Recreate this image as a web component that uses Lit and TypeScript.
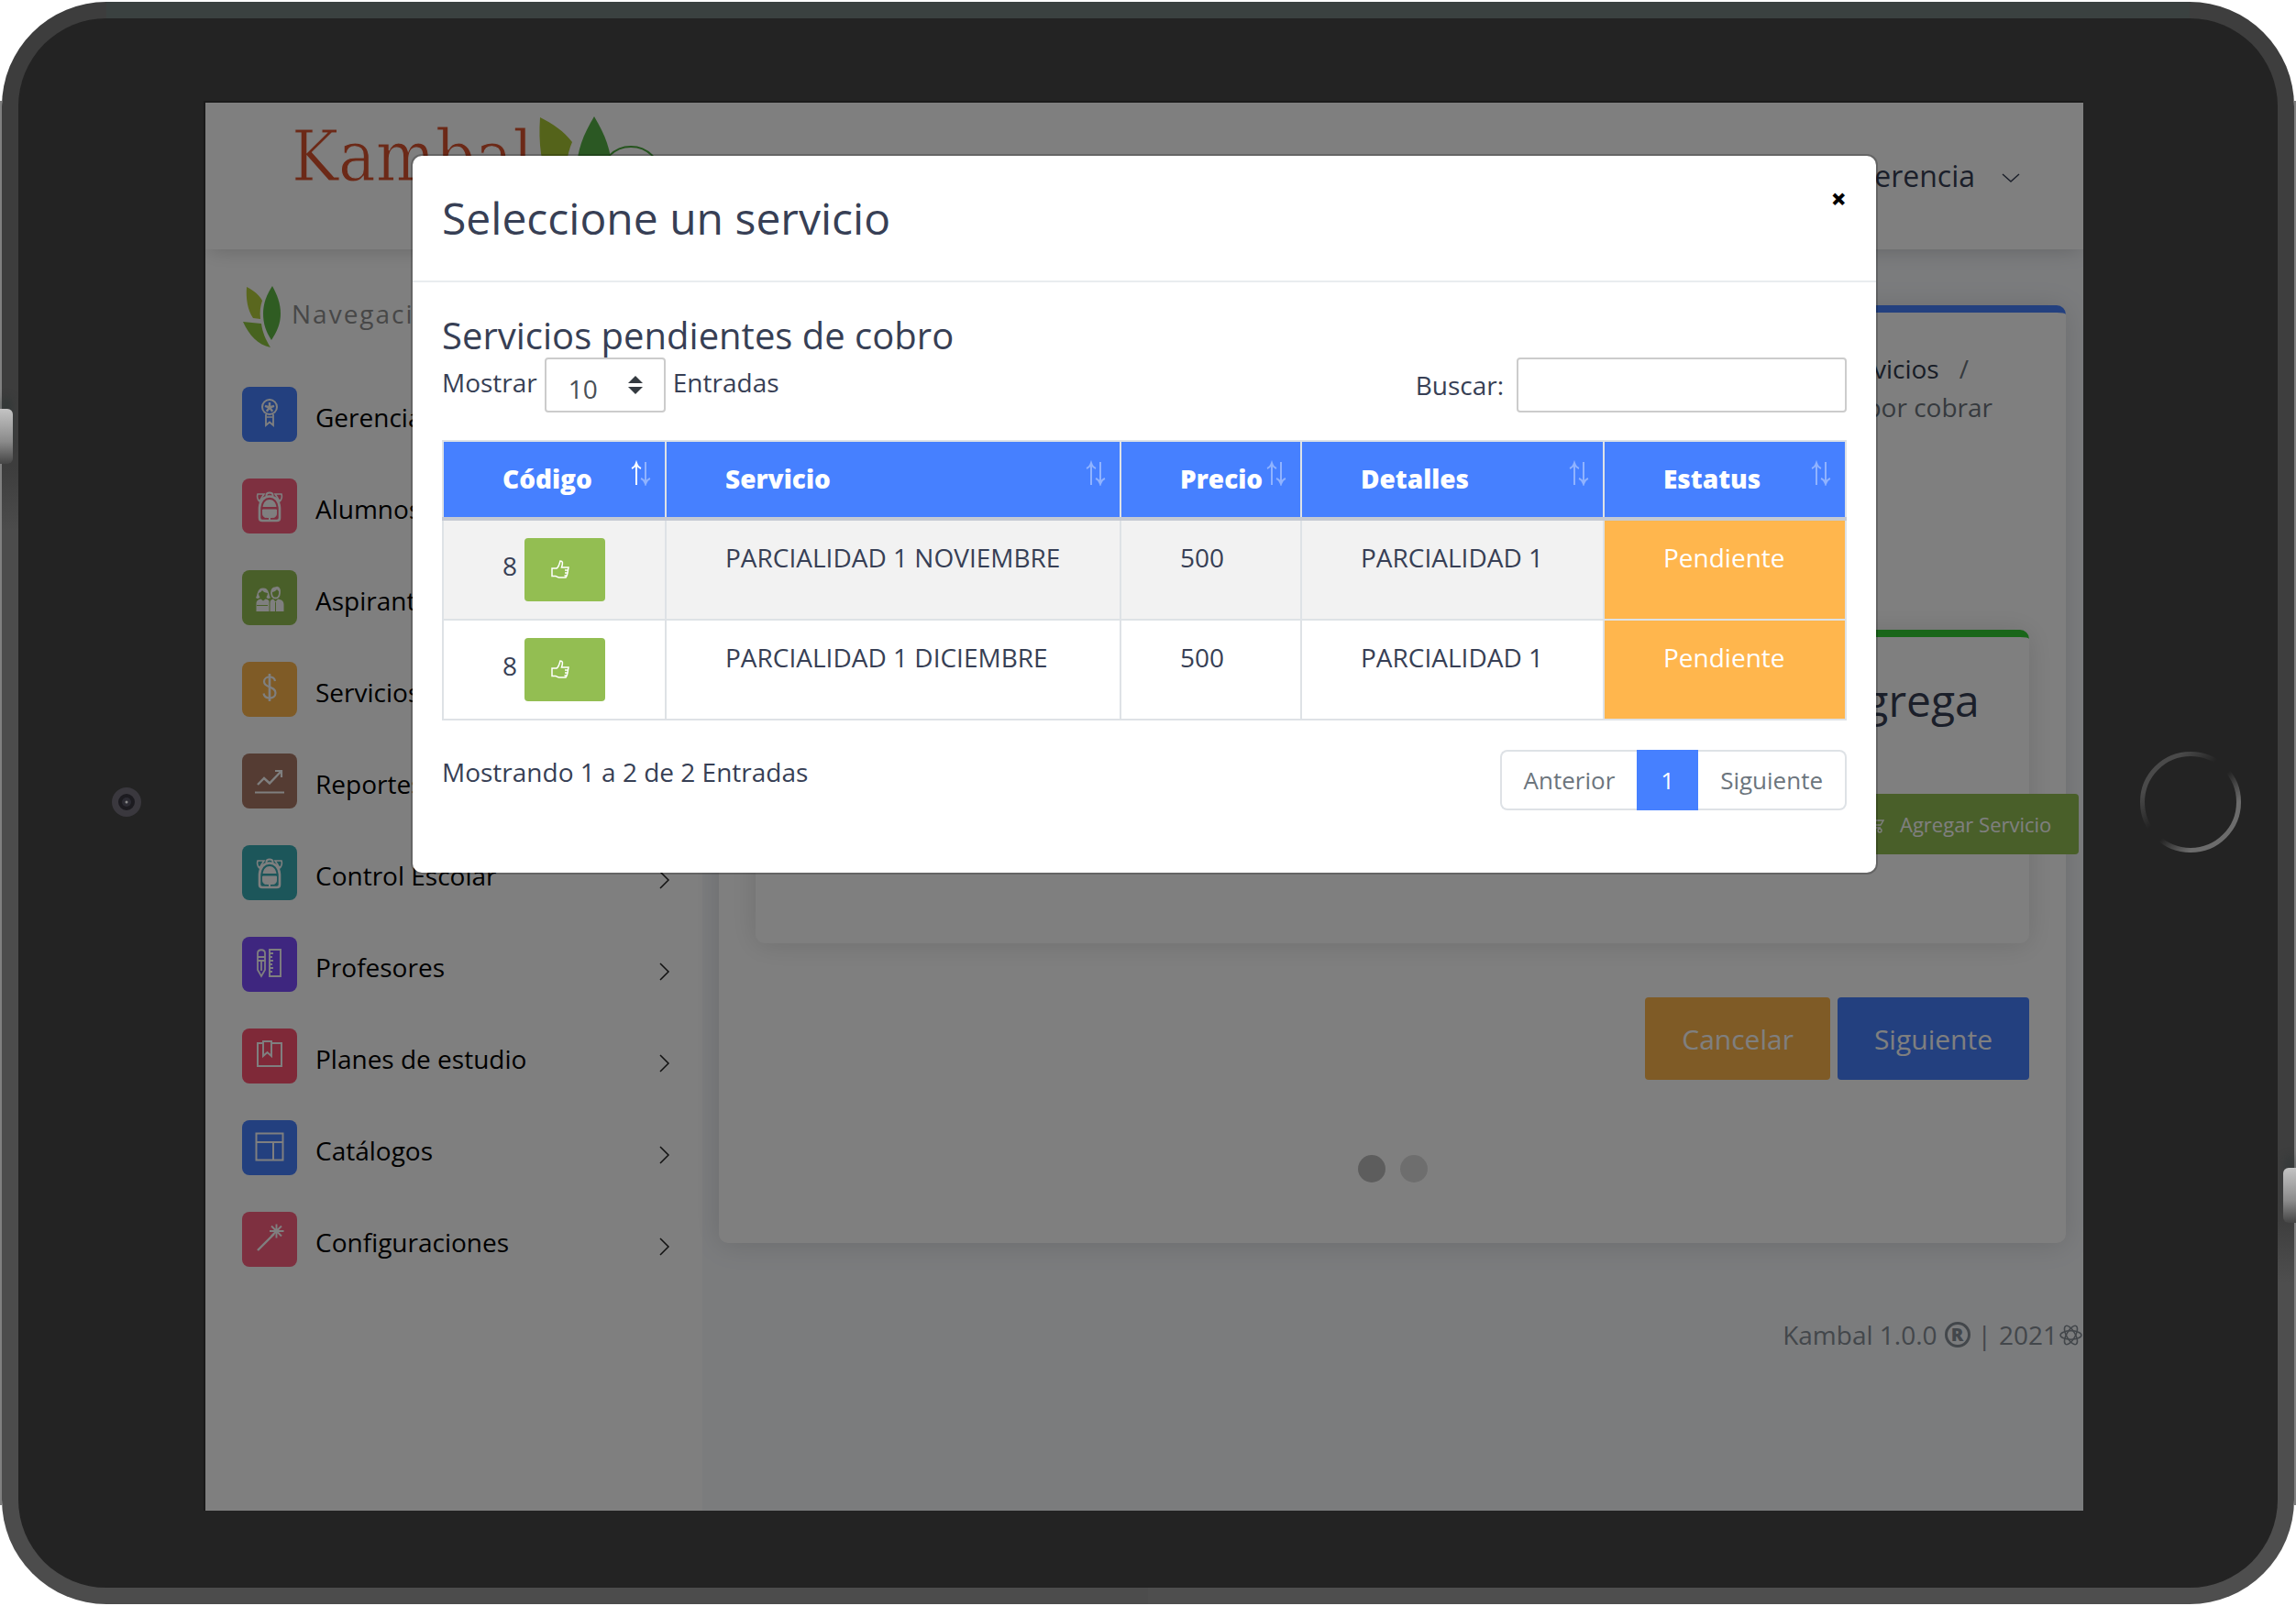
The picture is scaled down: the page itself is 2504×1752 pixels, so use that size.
import { LitElement, html, css, svg } from "lit";
import { customElement, property, state } from "lit/decorators.js";
import { classMap } from "lit/directives/class-map.js";

const FONT = css`"Open Sans", "Noto Sans", sans-serif`;

/* Menu glyphs, drawn on the 60 x 60 tile that carries them. */
const backpack = svg`
  <path d="M17 17h7l-2 3-3 5c-2-2-3-5-2-8zM43 17h-7l2 3 3 5c2-2 3-5 2-8z" stroke-width="1.6" fill="none"/>
  <path d="M26.500 19v-1a3.500 2.600 0 0 1 7 0v1" stroke-width="2" fill="none"/>
  <path d="M19 32c.5-8 5-12.500 11-12.500s10.500 4.500 11 12.500v11c0 2-1 3-3 3H22c-2 0-3-1-3-3z" stroke-width="2.600" fill="none"/>
  <path d="M22.500 31c.8-5 3.500-8 7.500-8s6.700 3 7.500 8z" fill="currentColor" stroke="none"/>
  <path d="M22.500 34h15v4c0 3-1.500 4.500-4 4.500h-7c-2.500 0-4-1.500-4-4.500z" fill="currentColor" stroke-width="1"/>
  <path d="M30 43v3" stroke-width="2"/>`;

const glyphs = {
  award: svg`
    <circle cx="30" cy="22" r="8" fill="none" stroke-width="2"/>
    <path d="M30 17v5.500l5-1.600M30 22.500l3.200 4.200M30 22.500l-3.200 4.200M30 22.500l-5-1.600" stroke-width="2.400" fill="none"/>
    <path d="M26 30v12l4-3.500 4 3.500V30" fill="none" stroke-width="1.800"/>
    <path d="M27 33h6" stroke-width="1.400"/>`,
  backpack,
  people: svg`
    <path d="M15 30c2-2 1-10.500 8-10.500s6 8.500 8 10.500c-2 1.500-4 1-4.500-.5 1-1.500 1.500-3 1.500-4.500-3-.5-5-1.500-6-3-1 1.500-2.500 2.500-4 3 0 2 .5 3 1.500 4.500-.8 1.500-3 2-4.500.5z" fill="currentColor" stroke="none"/>
    <path d="M15.500 37c0-4 2-5 5-5.500l2.500 2 2.500-2c2 .3 3 .7 4 2V45h-14z" fill="currentColor" stroke="none"/>
    <path d="M32 25c0-4 2-6 4.500-5.500l1.500-.8c2.500.6 3.500 3 3 6.300-.3 3.500-2 5.500-4.500 5.500s-4.200-2-4.500-5.500z" fill="none" stroke-width="1.800"/>
    <path d="M32 24c3 0 5-1.500 6-3l3 3-.5-4-4-1.500-4 2z" fill="currentColor" stroke="none"/>
    <path d="M30.500 45v-9c0-3 1.500-4 3.500-4.500l2.500 3 2.500-3c4 .6 6.500 2 6.500 6V45z" fill="currentColor" stroke="none"/>
    <path class="cut" d="M16 38.500h12M36.500 35v10" stroke-width="1"/>`,
  dollar: svg`
    <path d="M30 13v30" stroke-width="2.600"/>
    <path d="M36 21c-.5-3-3-4.500-6-4.500s-6 1.700-6 5c0 7.500 12.500 4.500 12.500 12.500 0 3.500-3 5.500-6.500 5.500s-6-2-6.500-5" fill="none" stroke-width="2.200"/>`,
  chart: svg`
    <path d="M17 34l7-7 6 5.500L42 20" fill="none" stroke-width="2.400"/>
    <path d="M36 19h7v7M14 42.500h32" fill="none" stroke-width="2.200"/>`,
  ruler: svg`
    <path d="M17 18c0-5 8-5 8 0v18l-4 7-4-7zM17 22h8M17 26h8M21 26v11" fill="none" stroke-width="1.800"/>
    <path d="M30 14h12v29H30zM30 18h4M30 22h3M30 26h4M30 30h3M30 34h4M30 38h3" fill="none" stroke-width="1.900"/>`,
  book: svg`
    <path d="M22 16h-5v25h26V16h-11" fill="none" stroke-width="2"/>
    <path d="M23 14h9v16l-4.500-4-4.500 4z" fill="none" stroke-width="2"/>`,
  layout: svg`
    <path d="M15.500 14.500h29v29h-29zM15.500 24h29M34 24v19" fill="none" stroke-width="2"/>`,
  wand: svg`
    <path d="M17 42l18-18" stroke-width="2.400"/>
    <path d="M37.500 13.500v15M30 21h15.500M32 15.500l11 11M43 15.500l-11 11" stroke-width="1.900"/>`,
};

type Glyph = keyof typeof glyphs;

interface MenuEntry {
  label: string;
  glyph: Glyph;
  tone: string;
}

const MENU: MenuEntry[] = [
  { label: "Gerencia", glyph: "award", tone: "blue" },
  { label: "Alumnos", glyph: "backpack", tone: "pink" },
  { label: "Aspirantes", glyph: "people", tone: "green" },
  { label: "Servicios", glyph: "dollar", tone: "orange" },
  { label: "Reportes", glyph: "chart", tone: "brown" },
  { label: "Control Escolar", glyph: "backpack", tone: "teal" },
  { label: "Profesores", glyph: "ruler", tone: "purple" },
  { label: "Planes de estudio", glyph: "book", tone: "red" },
  { label: "Catálogos", glyph: "layout", tone: "blue" },
  { label: "Configuraciones", glyph: "wand", tone: "pink" },
];

@customElement("side-menu")
class SideMenu extends LitElement {
  static styles = css`
    :host {
      display: block;
      flex: 0 0 542px;
      box-sizing: border-box;
      padding: 40px 30px 0 40px;
      background: #fff;
      font: 28px/42px ${FONT};
    }
    .brand {
      display: flex;
      align-items: flex-start;
      gap: 10px;
      height: 68px;
      margin-bottom: 42px;
      color: #8f8f8f;
      letter-spacing: 2px;
      line-height: 60px;
    }
    .brand svg {
      width: 44px;
      height: 68px;
    }
    ul {
      list-style: none;
      margin: 0;
      padding: 0;
      display: grid;
      gap: 40px;
    }
    a {
      display: flex;
      height: 60px;
      gap: 20px;
      color: #000;
      text-decoration: none;
      line-height: 67px;
    }
    .label {
      flex: 1;
    }
    .tile {
      width: 60px;
      height: 60px;
      border-radius: 8px;
      color: #fff;
      stroke: currentColor;
    }
    .chevron {
      width: 20px;
      height: 20px;
      margin-top: 28px;
      fill: none;
      stroke: #222;
      stroke-width: 1.500;
    }
    .blue { background: #4680ff; }
    .pink { background: #fc6180; }
    .green { background: #93be52; }
    .orange { background: #ffb64d; }
    .brown { background: #ab7967; }
    .teal { background: #39adb5; }
    .purple { background: #7c4dff; }
    .red { background: #ff5370; }
    .cut { stroke: #93be52; }
  `;

  render() {
    return html`
      <div class="brand">
        <svg viewBox="0 0 44 68" aria-hidden="true">
          <path d="M5 1c8 4 14 9 17 15-2 6-3 12-2 20l-8-1C6 26 4 14 5 1z" fill="#b4cf3c" />
          <path d="M33 0c5 9 9 19 9 30s-4 20-10 29c-6-9-9-18-9-29s4-21 10-30z" fill="#5fb945" />
          <path d="M1 39l20 2c1 9 5 18 10 26C17 64 8 54 1 39z" fill="#8ec63f" />
        </svg>
        <span>Navegación</span>
      </div>
      <nav aria-label="Navegación">
        <ul>
          ${MENU.map(
            (item) => html`<li>
              <a href="#">
                <svg class="tile ${item.tone}" viewBox="0 0 60 60" aria-hidden="true">${glyphs[item.glyph]}</svg>
                <span class="label">${item.label}</span>
                <svg class="chevron" viewBox="0 0 20 20" aria-hidden="true"><path d="M4 1l9 9-9 9" /></svg>
              </a>
            </li>`
          )}
        </ul>
      </nav>
    `;
  }
}

@customElement("top-bar")
class TopBar extends LitElement {
  static styles = css`
    :host {
      display: flex;
      justify-content: space-between;
      height: 160px;
      box-sizing: border-box;
      padding: 0 69px 0 94px;
      background: #fff;
      box-shadow: 0 4px 22px -4px rgba(0, 0, 0, 0.2);
      position: relative;
    }
    .logo {
      display: flex;
      align-items: flex-start;
      text-decoration: none;
      color: #d9532f;
      font: 76px/118px "DejaVu Serif Condensed", "DejaVu Serif", serif;
      -webkit-text-stroke: 1px #fff;
    }
    .logo svg {
      width: 140px;
      height: 96px;
      margin: 14px 0 0 4px;
    }
    .user {
      display: flex;
      align-items: center;
      align-self: flex-start;
      gap: 29px;
      height: 160px;
      padding: 0;
      border: 0;
      background: none;
      color: #373f55;
      font: 32px/48px ${FONT};
    }
    .user svg {
      width: 20px;
      height: 12px;
      margin-top: 4px;
      fill: none;
      stroke: #373f55;
      stroke-width: 1.500;
    }
  `;

  render() {
    return html`
      <a class="logo" href="#" aria-label="Kambal">
        <span>Kambal</span>
        <svg viewBox="0 0 140 96" aria-hidden="true">
          <path d="M4 2c14 7 26 15 35 27-6 14-8 30-6 50L16 76C5 56 2 30 4 2z" fill="#a9c634" />
          <path d="M63 1c12 20 19 38 19 58 0 14-6 26-18 36C50 84 44 72 44 59c0-20 7-38 19-58z" fill="#56b146" />
          <circle cx="103" cy="67" r="33" fill="none" stroke="#4aa83c" stroke-width="2" />
        </svg>
      </a>
      <button class="user" type="button">
        <span>Gerencia</span>
        <svg viewBox="0 0 20 12" aria-hidden="true"><path d="M1 2l9 8 9-8" /></svg>
      </button>
    `;
  }
}

@customElement("page-content")
class PageContent extends LitElement {
  static styles = css`
    :host {
      display: block;
      flex: 1;
      min-width: 0;
      box-sizing: border-box;
      padding: 61px 19px 0 18px;
      color: #373f55;
      font: 28px/42px ${FONT};
    }
    .card {
      box-sizing: border-box;
      padding: 40px;
      border-radius: 10px;
      background: #fff;
      box-shadow: 0 2px 30px rgba(0, 0, 0, 0.13);
    }
    .outer {
      border-top: 8px solid #4680ff;
      padding-bottom: 66px;
    }
    .inner {
      border-top: 8px solid #32cd32;
      padding-bottom: 97px;
    }
    .crumbs {
      display: grid;
      justify-content: end;
      justify-items: end;
      list-style: none;
      margin: 0 40px 222px 0;
      padding: 0;
      color: #6c757d;
    }
    .crumbs a {
      color: #303a4d;
      text-decoration: none;
    }
    .crumbs .sep {
      padding: 0 26px 0 22px;
    }
    .add {
      width: 170px;
      margin-left: auto;
    }
    h2 {
      margin: 0 0 73px;
      font-size: 48px;
      line-height: 58px;
      font-weight: 400;
    }
    button {
      border: 0;
      border-radius: 4px;
      color: #fff;
      font-family: inherit;
      font-weight: 400;
    }
    .add button {
      display: flex;
      align-items: center;
      gap: 17px;
      width: max-content;
      height: 66px;
      padding: 0 30px;
      background: #93be52;
      font-size: 22px;
    }
    .add svg {
      width: 22px;
      height: 22px;
      fill: none;
      stroke: #fff;
      stroke-width: 1.400;
    }
    .actions {
      display: flex;
      justify-content: flex-end;
      gap: 8px;
      margin: 59px 0 82px;
    }
    .actions button {
      height: 90px;
      padding: 0 40px;
      font-size: 30px;
    }
    .cancel { background: #ffb64d; }
    .next { background: #4680ff; }
    .steps {
      display: flex;
      justify-content: center;
      gap: 16px;
    }
    .step {
      width: 30px;
      height: 30px;
      border-radius: 50%;
      background: #ddd;
    }
    .step.current { background: #bbb; }
    footer {
      display: flex;
      align-items: center;
      justify-content: flex-end;
      gap: 8px;
      margin: 79px -18px 0 0;
      color: #868e96;
    }
    .reg {
      box-sizing: border-box;
      width: 28px;
      height: 28px;
      border: 3px solid currentColor;
      border-radius: 50%;
      text-align: center;
      font-size: 20px;
      line-height: 22px;
      font-weight: 800;
    }
    .year {
      display: flex;
      align-items: center;
      gap: 2px;
    }
    footer svg {
      width: 25px;
      height: 25px;
      fill: none;
      stroke: currentColor;
      stroke-width: 1.500;
    }
  `;

  render() {
    return html`
      <main class="card outer">
        <ol class="crumbs">
          <li><a href="#">Servicios</a><span class="sep">/</span></li>
          <li>Servicios por cobrar</li>
        </ol>
        <section class="card inner">
          <div class="add">
            <h2>Agrega</h2>
            <button type="button">
              <svg viewBox="0 0 22 22" aria-hidden="true">
                <path d="M1 4h4l3 11h10M6 7h15l-3 5H7" />
                <circle cx="9" cy="18" r="2" /><circle cx="17" cy="18" r="2" />
              </svg>
              <span>Agregar Servicio</span>
            </button>
          </div>
        </section>
        <div class="actions">
          <button class="cancel" type="button">Cancelar</button>
          <button class="next" type="button">Siguiente</button>
        </div>
        <div class="steps"><span class="step current"></span><span class="step"></span></div>
      </main>
      <footer>
        <span>Kambal 1.0.0</span>
        <span class="reg">R</span>
        <span>|</span>
        <span class="year">2021<svg viewBox="0 0 24 24" aria-hidden="true">
          <ellipse cx="12" cy="12" rx="11" ry="4.500" />
          <ellipse cx="12" cy="12" rx="11" ry="4.500" transform="rotate(60 12 12)" />
          <ellipse cx="12" cy="12" rx="11" ry="4.500" transform="rotate(120 12 12)" />
        </svg></span>
      </footer>
    `;
  }
}

interface ServiceRow {
  code: string;
  service: string;
  price: string;
  details: string;
  status: string;
}

const COLUMNS = [
  { label: "Código", width: "w-code" },
  { label: "Servicio", width: "w-service" },
  { label: "Precio", width: "w-price" },
  { label: "Detalles", width: "w-details" },
  { label: "Estatus", width: "w-status" },
];

@customElement("service-dialog")
class ServiceDialog extends LitElement {
  @property({ attribute: false }) rows: ServiceRow[] = [
    { code: "8", service: "PARCIALIDAD 1 NOVIEMBRE", price: "500", details: "PARCIALIDAD 1", status: "Pendiente" },
    { code: "8", service: "PARCIALIDAD 1 DICIEMBRE", price: "500", details: "PARCIALIDAD 1", status: "Pendiente" },
  ];
  @state() private sorted = 0;

  static styles = css`
    :host {
      display: block;
      box-sizing: border-box;
      width: 1600px;
      max-width: calc(100% - 112px);
      border: 2px solid rgba(0, 0, 0, 0.2);
      border-radius: 12px;
      background: #fff;
      background-clip: padding-box;
      color: #373f55;
      font: 28px/42px ${FONT};
    }
    header {
      display: flex;
      justify-content: space-between;
      align-items: flex-start;
      padding: 32px;
      border-bottom: 2px solid #e9ecef;
    }
    h1, h2 {
      margin: 0;
      font-weight: 400;
    }
    h1 {
      font-size: 48px;
      line-height: 72px;
    }
    h2 {
      font-size: 40px;
      line-height: 48px;
    }
    .close {
      padding: 0;
      border: 0;
      background: none;
      color: #000;
      font: 800 30px/30px ${FONT};
    }
    .body {
      padding: 34px 32px 68px;
    }
    .tools, .foot, .length, .search {
      display: flex;
    }
    .tools {
      justify-content: space-between;
      margin-bottom: 30px;
    }
    .length {
      gap: 8px;
      line-height: 55px;
    }
    .search {
      gap: 14px;
      line-height: 60px;
    }
    .pick {
      display: grid;
      grid-template-columns: 132px;
    }
    .pick > * {
      grid-area: 1 / 1;
    }
    select, input {
      box-sizing: border-box;
      height: 60px;
      border: 2px solid #ccc;
      border-radius: 4px;
      background: #fff;
      color: #495057;
      font: 28px/42px ${FONT};
      appearance: none;
    }
    select {
      padding: 8px 24px 0;
    }
    input {
      width: 360px;
      padding: 0 16px;
    }
    .pick svg {
      width: 18px;
      height: 20px;
      margin: 20px 24px 0 0;
      justify-self: end;
      fill: #343a40;
      pointer-events: none;
    }
    table {
      width: 100%;
      table-layout: fixed;
      border-collapse: collapse;
    }
    th, td {
      box-sizing: border-box;
      padding: 19px 0 19px 64px;
      border: 2px solid #dee2e6;
      text-align: left;
      vertical-align: top;
      white-space: nowrap;
    }
    th {
      padding-bottom: 21px;
      border-bottom: 4px solid #c5cad3;
      background: #4680ff;
      color: #fff;
      font-weight: 800;
    }
    .w-code { width: 243px; }
    .w-service { width: 496px; }
    .w-price { width: 197px; }
    .w-details { width: 330px; }
    .head {
      display: flex;
      justify-content: space-between;
      padding-right: 14px;
    }
    .head svg {
      flex: none;
      width: 24px;
      height: 28px;
      margin-top: 1px;
      fill: none;
      stroke: #fff;
      stroke-width: 2;
    }
    .dim { opacity: 0.4; }
    tbody tr:nth-child(odd) { background: #f2f2f2; }
    .code {
      display: flex;
      gap: 8px;
      line-height: 60px;
    }
    .code button {
      width: 88px;
      height: 69px;
      padding: 0 0 2px 29px;
      border: 0;
      border-radius: 4px;
      background: #93be52;
      display: flex;
      align-items: center;
    }
    .code svg {
      width: 20px;
      height: 20px;
      fill: none;
      stroke: #fff;
      stroke-width: 1.500;
    }
    .status {
      background: #ffb64d;
      color: #fff;
    }
    .foot {
      justify-content: space-between;
      align-items: flex-start;
      margin-top: 32px;
    }
    .info { padding-top: 3px; }
    .pages {
      display: flex;
      font-size: 26px;
      line-height: 62px;
    }
    .pages a {
      padding: 0 24px;
      border: 2px solid #dee2e6;
      color: #6c757d;
      text-decoration: none;
    }
    .pages a:first-child {
      border-right: 0;
      border-radius: 8px 0 0 8px;
    }
    .pages a:last-child {
      border-left: 0;
      border-radius: 0 8px 8px 0;
    }
    .pages .active {
      border-color: #4680ff;
      background: #4680ff;
      color: #fff;
    }
  `;

  render() {
    return html`
      <header>
        <h1>Seleccione un servicio</h1>
        <button class="close" type="button" aria-label="Cerrar">×</button>
      </header>
      <div class="body">
        <h2>Servicios pendientes de cobro</h2>
        <div class="tools">
          <div class="length">
            <label for="length">Mostrar</label>
            <span class="pick">
              <select id="length"><option>10</option></select>
              <svg viewBox="0 0 18 20" aria-hidden="true"><path d="M9 0l8 8H1zM9 20l8-8H1z" /></svg>
            </span>
            <span>Entradas</span>
          </div>
          <div class="search">
            <label for="search">Buscar:</label>
            <input id="search" type="search" />
          </div>
        </div>
        <table>
          <thead>
            <tr>
              ${COLUMNS.map(
                (column, index) => html`<th class=${column.width} scope="col" @click=${() => (this.sorted = index)}>
                  <div class="head">
                    <span>${column.label}</span>
                    <svg viewBox="0 0 24 28" aria-hidden="true">
                      <path class=${classMap({ dim: this.sorted !== index })} d="M7 27V3M2 9c3-1 4-3 5-6 1 3 2 5 5 6" />
                      <path class="dim" d="M17 2v24M12 20c3 1 4 3 5 6 1-3 2-5 5-6" />
                    </svg>
                  </div>
                </th>`
              )}
            </tr>
          </thead>
          <tbody>
            ${this.rows.map(
              (row) => html`<tr>
                <td>
                  <div class="code">
                    <span>${row.code}</span>
                    <button type="button" aria-label="Elegir">
                      <svg viewBox="0 0 20 20" aria-hidden="true">
                        <path d="M1 9h5c2-1 3-4 4-8 3 0 3 2 1.500 7H19l-.5 3-.5 3-.8 3-1.200 2H9c-2 0-3-1.500-4-1.500H1zM15 11h4M15 14h3.500M14.500 17h3" />
                      </svg>
                    </button>
                  </div>
                </td>
                <td>${row.service}</td>
                <td>${row.price}</td>
                <td>${row.details}</td>
                <td class="status">${row.status}</td>
              </tr>`
            )}
          </tbody>
        </table>
        <div class="foot">
          <span class="info">Mostrando 1 a 2 de 2 Entradas</span>
          <nav class="pages" aria-label="Páginas">
            <a href="#">Anterior</a><a class="active" href="#" aria-current="page">1</a><a href="#">Siguiente</a>
          </nav>
        </div>
      </div>
    `;
  }
}

@customElement("app-root")
class AppRoot extends LitElement {
  static styles = css`
    :host {
      display: block;
      box-sizing: border-box;
      min-height: 100vh;
      padding: 2px;
      background:
        linear-gradient(#808080, #808080) left center / 2px calc(100% - 220px) no-repeat,
        linear-gradient(#808080, #808080) right center / 2px calc(100% - 220px) no-repeat,
        #fff;
    }
    .frame {
      position: relative;
      box-sizing: border-box;
      display: grid;
      min-height: calc(100vh - 4px);
      padding: 18px;
      border-radius: 114px;
      background:
        linear-gradient(#3a4140, #3a4140) center top / calc(100% - 228px) 18px no-repeat,
        linear-gradient(#3d3d3d 29%, #4c4c4c 33%) left / 50% 100% no-repeat,
        linear-gradient(#3e3e3e 76%, #4e4e4e 80%) right / 50% 100% no-repeat;
    }
    .side {
      position: absolute;
      width: 14px;
      height: 60px;
      background: linear-gradient(#c4c4c4, #8a8a8a 60%, #454545);
    }
    .side.left {
      left: -2px;
      top: 444px;
      border-radius: 0 6px 6px 0;
      box-shadow: 0 -16px 10px -4px #2a3534;
    }
    .side.right {
      right: -2px;
      bottom: 416px;
      border-radius: 6px 0 0 6px;
      box-shadow: 0 -16px 10px -4px #2e3637;
    }
    .bezel {
      display: grid;
      grid-template-columns: 204px minmax(0, 1fr) 212px;
      align-items: stretch;
      padding: 92px 0 84px;
      border-radius: 96px;
      background: #232323;
    }
    .hardware {
      display: grid;
      place-items: center;
      padding: 0 0 10px 32px;
    }
    .hardware.home {
      padding-left: 22px;
    }
    .camera {
      width: 32px;
      height: 32px;
    }
    .button {
      width: 110px;
      height: 114px;
    }
    .screen {
      position: relative;
      display: flex;
      flex-direction: column;
      overflow: hidden;
      background: #f6f8fb;
      box-shadow: -1px -1px 0 1px #1a1a1a;
    }
    .columns {
      display: flex;
      flex: 1;
    }
    .backdrop {
      position: absolute;
      inset: 0;
      display: flex;
      justify-content: center;
      align-items: flex-start;
      padding-top: 56px;
      background: rgba(0, 0, 0, 0.5);
    }
  `;

  render() {
    return html`
      <div class="frame">
        <span class="side left"></span>
        <span class="side right"></span>
        <div class="bezel">
          <div class="hardware">
            <svg class="camera" viewBox="0 0 32 32" aria-hidden="true">
              <circle cx="16" cy="16" r="12.500" fill="#1c1b20" stroke="#3a383e" stroke-width="7" />
              <circle cx="16" cy="16" r="5" fill="#2c2b33" />
              <circle cx="16" cy="16" r="1.500" fill="#8a8a8a" />
            </svg>
          </div>
          <div class="screen">
            <top-bar></top-bar>
            <div class="columns">
              <side-menu></side-menu>
              <page-content></page-content>
            </div>
            <div class="backdrop">
              <service-dialog role="dialog"></service-dialog>
            </div>
          </div>
          <div class="hardware home">
            <svg class="button" viewBox="0 0 110 114" aria-hidden="true">
              <defs>
                <linearGradient id="rim" x1="0" y1="0" x2="1" y2="1">
                  <stop offset="0.200" stop-color="#4a4a4a" />
                  <stop offset="0.420" stop-color="#232323" />
                  <stop offset="0.540" stop-color="#232323" />
                  <stop offset="0.750" stop-color="#6c6c6c" />
                </linearGradient>
              </defs>
              <circle cx="55" cy="57" r="52.500" fill="none" stroke="url(#rim)" stroke-width="5" />
            </svg>
          </div>
        </div>
      </div>
    `;
  }
}
